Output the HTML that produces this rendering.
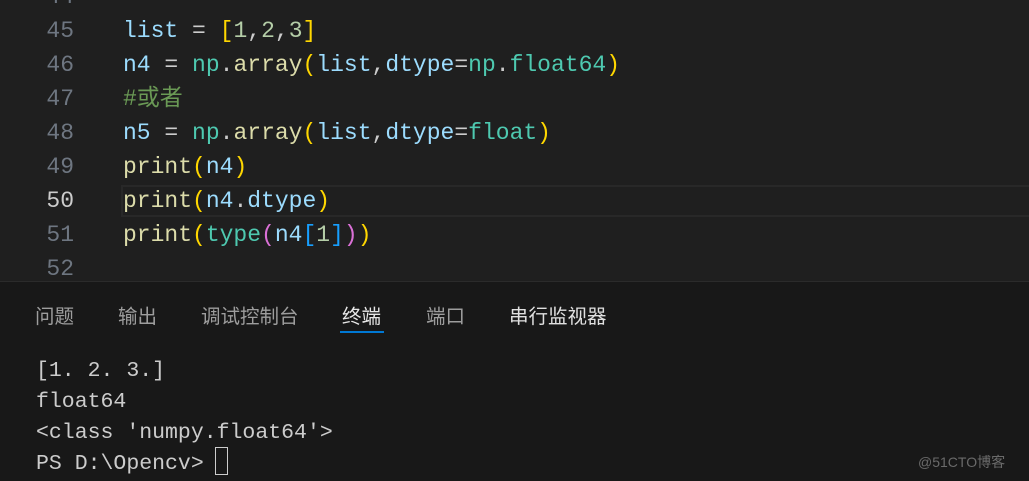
<!DOCTYPE html>
<html><head><meta charset="utf-8"><style>
body{margin:0;width:1029px;height:481px;overflow:hidden;background:#181818;font-family:"Liberation Mono",monospace;position:relative}
.ed{position:absolute;left:0;top:0;width:1029px;height:281px;background:#1f1f1f;border-bottom:1px solid #2b2b2b}
.ln{position:absolute;left:0;width:74px;text-align:right;color:#6e7681;font-size:23px;line-height:34px}
.code{position:absolute;left:123px;font-size:23px;line-height:34px;color:#9cdcfe;white-space:pre}
.cur{position:absolute;left:121px;top:185px;width:910px;height:32px;border:2px solid #282828;box-sizing:border-box}
.y{color:#ffd700}.f{color:#dcdcaa}.g{color:#4ec9b0}.w{color:#cccccc}.n{color:#b5cea8}.c{color:#6a9955}.p{color:#da70d6}.b{color:#179fff}
.tabs{position:absolute;top:300px;font-family:"Liberation Sans","Noto Sans CJK SC",sans-serif;font-size:19.5px;color:#9d9d9d}
.t{position:absolute;left:0;top:0;white-space:nowrap}
.term{position:absolute;left:36px;top:356px;font-size:21.5px;line-height:31px;color:#cccccc;white-space:pre}
</style></head><body>
<div class="ed">
<div class="cur"></div>
<div class="ln" style="top:-20px">44</div>
<div class="ln" style="top:14px">45</div>
<div class="ln" style="top:48px">46</div>
<div class="ln" style="top:82px">47</div>
<div class="ln" style="top:116px">48</div>
<div class="ln" style="top:150px">49</div>
<div class="ln" style="top:184px;color:#cccccc">50</div>
<div class="ln" style="top:218px">51</div>
<div class="ln" style="top:252px">52</div>
<div class="code" style="top:14px">list <span class="w">=</span> <span class="y">[</span><span class="n">1</span><span class="w">,</span><span class="n">2</span><span class="w">,</span><span class="n">3</span><span class="y">]</span></div>
<div class="code" style="top:48px">n4 <span class="w">=</span> <span class="g">np</span><span class="w">.</span><span class="f">array</span><span class="y">(</span>list<span class="w">,</span>dtype<span class="w">=</span><span class="g">np</span><span class="w">.</span><span class="g">float64</span><span class="y">)</span></div>
<div class="code c" style="top:82px;font-family:'Liberation Mono','Noto Sans CJK SC',monospace">#或者</div>
<div class="code" style="top:116px">n5 <span class="w">=</span> <span class="g">np</span><span class="w">.</span><span class="f">array</span><span class="y">(</span>list<span class="w">,</span>dtype<span class="w">=</span><span class="g">float</span><span class="y">)</span></div>
<div class="code" style="top:150px"><span class="f">print</span><span class="y">(</span>n4<span class="y">)</span></div>
<div class="code" style="top:184px"><span class="f">print</span><span class="y">(</span>n4<span class="w">.</span>dtype<span class="y">)</span></div>
<div class="code" style="top:218px"><span class="f">print</span><span class="y">(</span><span class="g">type</span><span class="p">(</span>n4<span class="b">[</span><span class="n">1</span><span class="b">]</span><span class="p">)</span><span class="y">)</span></div>
</div>
<div class="tabs" style="left:35px"><span class="t">问题</span></div>
<div class="tabs" style="left:118px"><span class="t">输出</span></div>
<div class="tabs" style="left:201px"><span class="t">调试控制台</span></div>
<div class="tabs" style="left:342px;color:#e7e7e7"><span class="t">终端</span></div>
<div style="position:absolute;left:340px;top:331px;width:44px;height:2px;background:#0078d4"></div>
<div class="tabs" style="left:426px"><span class="t">端口</span></div>
<div class="tabs" style="left:509px;color:#e0e0e0"><span class="t">串行监视器</span></div>
<div class="term">[1. 2. 3.]
float64
&lt;class 'numpy.float64'&gt;
PS D:\Opencv&gt; </div>
<div style="position:absolute;left:215px;top:447px;width:13px;height:28px;border:1.5px solid #cccccc;box-sizing:border-box"></div>
<div style="position:absolute;left:918px;top:452px;font-family:'Liberation Sans','Noto Sans CJK SC',sans-serif;font-size:14px;color:#6a6a6a">@51CTO博客</div>
</body></html>
